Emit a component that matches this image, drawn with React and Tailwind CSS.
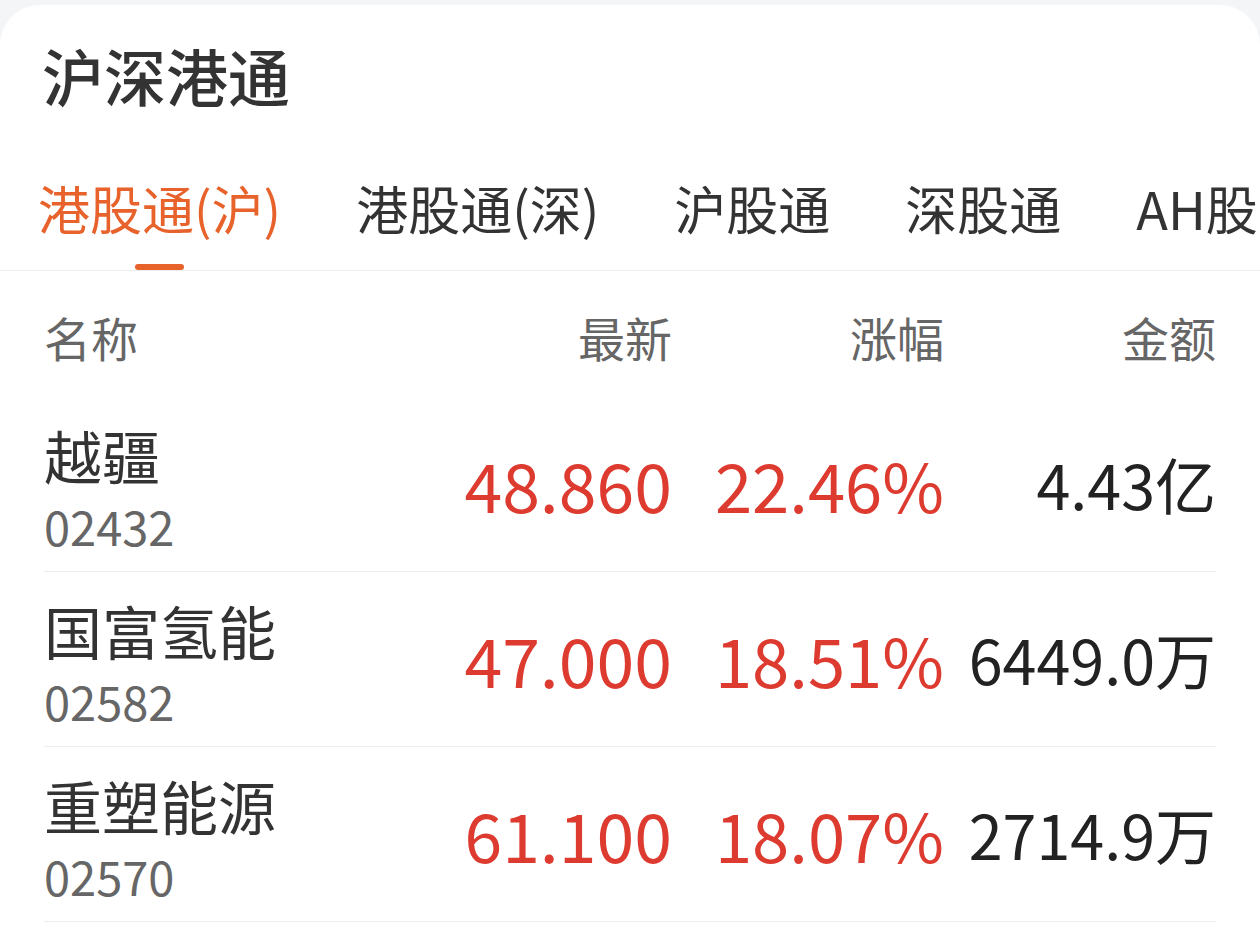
import React from 'react';

const tabs = ['港股通(沪)', '港股通(深)', '沪股通', '深股通', 'AH股'];

const rows = [
  { name: '越疆', code: '02432', price: '48.860', change: '22.46%', amount: '4.43亿' },
  { name: '国富氢能', code: '02582', price: '47.000', change: '18.51%', amount: '6449.0万' },
  { name: '重塑能源', code: '02570', price: '61.100', change: '18.07%', amount: '2714.9万' },
];

const font = { fontFamily: '"Noto Sans CJK SC", "Noto Sans", sans-serif' };

export default function App() {
  return (
    <div className="min-h-screen bg-[#f4f5f7] pt-[5px]" style={font}>
      <div className="h-[945px] overflow-hidden rounded-t-[40px] bg-white">
        {/* Title */}
        <div className="pl-[42px] pt-[30px] text-[62px] font-medium leading-[80px] text-[#333333]">
          沪深港通
        </div>

        {/* Tabs */}
        <div className="mt-[55px] flex gap-[75px] whitespace-nowrap border-b border-[#eeeeee] pl-[38px]">
          {tabs.map((t, i) => (
            <div key={t} className="flex shrink-0 flex-col items-center">
              <span
                className={`text-[52px] leading-[76px] ${i === 0 ? 'text-[#e8622c]' : 'text-[#333333]'}`}
              >
                {t}
              </span>
              <span
                className={`mt-[18px] h-[6px] w-[49px] rounded-full ${i === 0 ? 'bg-[#e8622c]' : 'bg-transparent'}`}
              />
            </div>
          ))}
        </div>

        {/* Table header */}
        <div className="mx-[44px] grid h-[126px] grid-cols-[1fr_260px_272px_272px] items-center pt-[6px] text-[47px] text-[#666666]">
          <span>名称</span>
          <span className="text-right">最新</span>
          <span className="text-right">涨幅</span>
          <span className="text-right">金额</span>
        </div>

        {/* Rows */}
        <div className="mx-[44px]">
          {rows.map((r) => (
            <div
              key={r.code}
              className="grid h-[175px] grid-cols-[1fr_260px_272px_272px] items-center border-b border-[#eeeeee]"
            >
              <div className="flex flex-col pt-[10px]">
                <span className="text-[58px] leading-[74px] text-[#333333]">{r.name}</span>
                <span className="text-[47px] leading-[68px] text-[#666666]">{r.code}</span>
              </div>
              <span className="text-right text-[68px] leading-[90px] text-[#dd3b30]">{r.price}</span>
              <span className="text-right text-[67px] leading-[90px] text-[#dd3b30]">{r.change}</span>
              <span className="text-right text-[61px] leading-[90px] text-[#222222]">{r.amount}</span>
            </div>
          ))}
        </div>
      </div>
    </div>
  );
}
